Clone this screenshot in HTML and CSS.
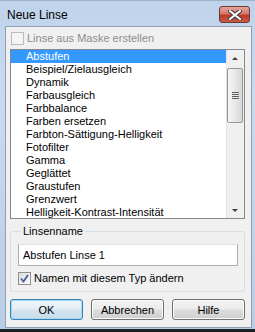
FILE: index.html
```html
<!DOCTYPE html>
<html lang="de">
<head>
    <meta charset="UTF-8">
    <title>Neue Linse</title>
    <link rel="stylesheet" href="styles.css">
</head>
<body>

    <div class="window">
        <!-- Title bar -->
        <div class="titlebar">
            <span class="title">Neue Linse</span>
            <div class="close-btn">
                <svg width="14" height="10" viewBox="0 0 14 10">
                    <path d="M2 1 L12 9 M12 1 L2 9" stroke="#3a3a3a" stroke-width="4" stroke-linecap="square"/>
                    <path d="M2 1 L12 9 M12 1 L2 9" stroke="#ffffff" stroke-width="2" stroke-linecap="square"/>
                </svg>
            </div>
        </div>

        <div class="client">
            <!-- Create from mask (disabled) -->
            <label class="check-row disabled">
                <span class="checkbox"></span>
                Linse aus Maske erstellen
            </label>

            <!-- Lens type list -->
            <div class="listbox">
                <ul class="items">
                    <li class="selected">Abstufen</li>
                    <li>Beispiel/Zielausgleich</li>
                    <li>Dynamik</li>
                    <li>Farbausgleich</li>
                    <li>Farbbalance</li>
                    <li>Farben ersetzen</li>
                    <li>Farbton-Sättigung-Helligkeit</li>
                    <li>Fotofilter</li>
                    <li>Gamma</li>
                    <li>Geglättet</li>
                    <li>Graustufen</li>
                    <li>Grenzwert</li>
                    <li>Helligkeit-Kontrast-Intensität</li>
                </ul>
                <div class="scrollbar">
                    <div class="arrow up"></div>
                    <div class="track">
                        <div class="thumb">
                            <span class="grip"></span>
                        </div>
                    </div>
                    <div class="arrow down"></div>
                </div>
            </div>

            <!-- Lens name -->
            <fieldset class="group">
                <legend>Linsenname</legend>
                <div class="textbox">Abstufen Linse 1</div>
                <label class="check-row">
                    <span class="checkbox checked">
                        <svg width="9" height="9" viewBox="0 0 9 9">
                            <path d="M1 4.5 L3.5 7.5 L8 1" fill="none" stroke="#4a5f97" stroke-width="1.8"/>
                        </svg>
                    </span>
                    Namen mit diesem Typ ändern
                </label>
            </fieldset>

            <!-- Buttons -->
            <div class="buttons">
                <button class="default">OK</button>
                <button>Abbrechen</button>
                <button>Hilfe</button>
            </div>
        </div>
    </div>

</body>
</html>
```

FILE: styles.css
```css
body {
    margin: 0;
    width: 255px;
    height: 332px;
    overflow: hidden;
    background: #1d2024;
    font-family: "Liberation Sans", Arial, sans-serif;
    font-size: 11px;
    color: #000;
}
.window {
    width: 255px;
    height: 329px;
    box-sizing: border-box;
    padding: 0 3px 1px 5px;
    background: linear-gradient(to bottom, #bfd3ea 0%, #c9dbef 30%, #b9cde4 100%);
    border-top: 1px solid #9fb2c8;
}
.titlebar {
    height: 25px;
    display: flex;
    align-items: center;
    justify-content: space-between;
}
.title {
    font-size: 12px;
    padding-left: 2px;
    padding-top: 3px;
}
.close-btn {
    width: 29px;
    height: 15px;
    margin-right: 2px;
    margin-top: 2px;
    border: 1px solid #6d3a3a;
    border-radius: 3px;
    background: linear-gradient(to bottom, #e3a59c 0%, #d47a6d 45%, #be3b2a 55%, #c65a48 100%);
    display: flex;
    align-items: center;
    justify-content: center;
}
.client {
    height: 300px;
    background: #f0f0f0;
    border: 1px solid #8d9fb4;
}
.check-row {
    display: flex;
    align-items: center;
    gap: 3px;
    height: 13px;
    line-height: 13px;
}
.check-row.disabled {
    margin: 5px 0 0 5px;
    color: #8d8d8d;
}
.checkbox {
    width: 11px;
    height: 11px;
    border: 1px solid #8e8f8f;
    background: linear-gradient(135deg, #dcdcdc, #fbfbfb);
    display: flex;
    align-items: center;
    justify-content: center;
    flex-shrink: 0;
}
.disabled .checkbox {
    border-color: #bcbcbc;
    background: #f4f4f4;
}
.listbox {
    margin: 4px 0 0 4px;
    width: 235px;
    height: 170px;
    box-sizing: border-box;
    border: 1px solid #828790;
    background: #fff;
    display: flex;
    overflow: hidden;
}
.items {
    list-style: none;
    margin: 0;
    padding: 0;
    flex: 1;
}
.items li {
    height: 13px;
    line-height: 13px;
    padding-left: 15px;
    white-space: nowrap;
}
.items li.selected {
    background: #3399ff;
    color: #fff;
}
.scrollbar {
    width: 17px;
    display: flex;
    flex-direction: column;
    background: #f0f0f0;
    border-left: 1px solid #e3e3e3;
}
.arrow {
    height: 17px;
    position: relative;
}
.arrow::after {
    content: "";
    position: absolute;
    left: 5px;
    width: 0;
    height: 0;
    border-left: 3px solid transparent;
    border-right: 3px solid transparent;
}
.arrow.up::after {
    top: 7px;
    border-bottom: 3px solid #404040;
}
.arrow.down::after {
    top: 8px;
    border-top: 3px solid #404040;
}
.track {
    flex: 1;
}
.thumb {
    margin: 1px 0 0 0;
    width: 14px;
    height: 53px;
    border: 1px solid #979797;
    border-radius: 2px;
    background: linear-gradient(to right, #f5f5f5 0%, #e8e8e8 50%, #d6d6d6 100%);
    display: flex;
    align-items: center;
    justify-content: center;
}
.grip {
    width: 7px;
    height: 7px;
    background: repeating-linear-gradient(to bottom, #5f5f5f 0 1px, #e8e8e8 1px 2px);
}
.group {
    margin: 5px 0 0 4px;
    width: 235px;
    box-sizing: border-box;
    padding: 6px 6px 6px 7px;
    border: 1px solid #d5dfe5;
    border-radius: 3px;
}
.group legend {
    padding: 0 2px;
    margin-left: 3px;
    line-height: 14px;
}
.textbox {
    width: 220px;
    height: 22px;
    box-sizing: border-box;
    border: 1px solid #abadb3;
    border-top-color: #e2e3ea;
    background: #fff;
    padding-left: 4px;
    line-height: 20px;
}
.group .check-row {
    margin-top: 6px;
}
.buttons {
    display: flex;
    gap: 8px;
    margin: 7px 0 0 4px;
}
button {
    width: 73px;
    height: 21px;
    padding: 0;
    font-family: inherit;
    font-size: 11px;
    color: #000;
    border: 1px solid #707070;
    border-radius: 3px;
    background: linear-gradient(to bottom, #f2f2f2 0%, #ebebeb 49%, #dddddd 51%, #cfcfcf 100%);
    box-shadow: inset 0 0 0 1px #fbfbfb;
}
button.default {
    border-color: #3c7fb1;
    box-shadow: inset 0 0 0 1px #9fdcf6;
    background: linear-gradient(to bottom, #eef5fa 0%, #e4eef6 49%, #d4e4f0 51%, #c9dcea 100%);
}
```
